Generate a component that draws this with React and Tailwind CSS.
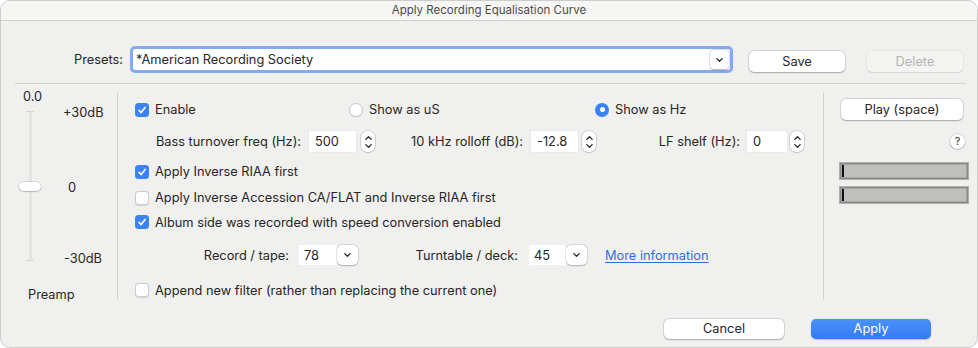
import React from "react";

function Check({ checked }) {
  return checked ? (
    <span className="w-[14px] h-[14px] rounded-[3.5px] bg-[#3a82f7] flex items-center justify-center shrink-0">
      <svg width="10" height="10" viewBox="0 0 10 10">
        <path d="M2 5.3 L4.1 7.6 L8.1 2.4" stroke="white" strokeWidth="1.6" fill="none" strokeLinecap="round" strokeLinejoin="round" />
      </svg>
    </span>
  ) : (
    <span className="w-[14px] h-[14px] rounded-[3.5px] bg-white border border-[#cbcbcb] shadow-[0_0.5px_1px_rgba(0,0,0,0.12)] shrink-0" />
  );
}

function Radio({ checked }) {
  return checked ? (
    <span className="w-[14px] h-[14px] rounded-full bg-[#3a82f7] flex items-center justify-center shrink-0">
      <span className="w-[5px] h-[5px] rounded-full bg-white" />
    </span>
  ) : (
    <span className="w-[14px] h-[14px] rounded-full bg-white border border-[#cbcbcb] shadow-[0_0.5px_1px_rgba(0,0,0,0.12)] shrink-0" />
  );
}

function ChevDown() {
  return (
    <svg width="7" height="4" viewBox="0 0 7 4">
      <path d="M0.8 0.6 L3.5 3.3 L6.2 0.6" stroke="#2a2a2a" strokeWidth="1.3" fill="none" strokeLinecap="round" strokeLinejoin="round" />
    </svg>
  );
}

function ChevUp() {
  return (
    <svg width="7" height="4" viewBox="0 0 7 4">
      <path d="M0.8 3.4 L3.5 0.7 L6.2 3.4" stroke="#2a2a2a" strokeWidth="1.3" fill="none" strokeLinecap="round" strokeLinejoin="round" />
    </svg>
  );
}

function Stepper() {
  return (
    <span className="w-[14px] h-[21px] rounded-[6px] bg-white shadow-[0_0_0_0.5px_rgba(0,0,0,0.18),0_0.5px_1.5px_rgba(0,0,0,0.2)] flex flex-col items-center justify-center gap-[4px] shrink-0">
      <ChevUp />
      <ChevDown />
    </span>
  );
}

function NumField({ value, w }) {
  return (
    <span className={`h-[21px] bg-white shadow-[0_0_0_0.5px_rgba(0,0,0,0.06)] flex items-center pl-[6px] shrink-0 ${w}`}>
      {value}
    </span>
  );
}

function Select({ value, iw }) {
  return (
    <span className="flex items-center h-[20px] shrink-0">
      <span className={`h-[20px] bg-white flex items-center pl-[5px] ${iw}`}>{value}</span>
      <span className="w-[21px] h-[20px] rounded-[5px] bg-white shadow-[0_0_0_0.5px_rgba(0,0,0,0.15),0_0.5px_1.5px_rgba(0,0,0,0.2)] flex items-center justify-center">
        <ChevDown />
      </span>
    </span>
  );
}

function CheckRow({ checked, label, mt }) {
  return (
    <div className={`flex items-center h-[20px] ${mt}`}>
      <Check checked={checked} />
      <span className="ml-[6px]">{label}</span>
    </div>
  );
}

function Meter() {
  return (
    <div className="w-[130px] h-[18px] bg-[#bfc0bd] border border-[#aeafac] shadow-[inset_0_0_0_1.5px_#8b8c89] flex items-stretch py-[2px] pl-[2px]">
      <span className="w-[2px] bg-[#111]" />
    </div>
  );
}

export default function App() {
  return (
    <div className="w-[978px] h-[348px] bg-[#f0f0ee] rounded-[10px] border border-[#cdcdcb] overflow-hidden flex flex-col text-[12.8px] text-[#262626] font-['Inter','Liberation_Sans',sans-serif] box-border">
      {/* title bar */}
      <div className="h-[20px] shrink-0 bg-[#f6f6f4] border-b border-[#cfcfcd] flex items-center justify-center text-[11.5px] text-[#4b4b4b] box-border">
        Apply Recording Equalisation Curve
      </div>

      {/* presets row */}
      <div className="flex items-start mt-[25px] h-[27px] shrink-0">
        <span className="w-[122px] text-right h-[27px] flex items-center justify-end pt-[1px]">Presets:</span>
        <div className="ml-[7px] w-[603px] h-[27px] rounded-[5px] border-[3px] border-[#82aaf3] bg-white flex items-center box-border">
          <span className="flex-1 pl-[3px]">*American Recording Society</span>
          <span className="w-[19px] h-[19px] mr-[1px] rounded-[4px] bg-white shadow-[0_0_0_0.5px_rgba(0,0,0,0.18),0_0.5px_1.5px_rgba(0,0,0,0.22)] flex items-center justify-center">
            <ChevDown />
          </span>
        </div>
        <button className="ml-[16px] mt-[5px] w-[96px] h-[21px] rounded-[5px] bg-white shadow-[0_0_0_0.5px_rgba(0,0,0,0.15),0_0.5px_1.5px_rgba(0,0,0,0.25)] text-[12.8px] text-[#262626]">
          Save
        </button>
        <button className="ml-[22px] mt-[5px] w-[96px] h-[21px] rounded-[5px] bg-[#f4f4f2] shadow-[0_0_0_0.5px_rgba(0,0,0,0.08),0_0.5px_1px_rgba(0,0,0,0.08)] text-[12.8px] text-[#b4b4b2]">
          Delete
        </button>
      </div>

      {/* separator */}
      <div className="ml-[14px] w-[951px] h-[1px] bg-[#d0d0ce] mt-[10px] shrink-0" />

      {/* main */}
      <div className="flex h-[216px] shrink-0">
        {/* left column */}
        <div className="w-[116px] flex flex-col shrink-0">
          <div className="mt-[5px] pl-[22px] h-[16px] leading-[16px]">0.0</div>
          <div className="flex">
            <div className="relative ml-[18px] w-[22px] h-[161px] flex flex-col items-center pt-[6px]">
              <div className="w-[8px] h-[1px] bg-[#d6d6d4]" />
              <div className="w-[3px] h-[148px] bg-[#e3e3e1]" />
              <div className="w-[8px] h-[1px] bg-[#d6d6d4]" />
              <div className="absolute left-0 top-[77px] w-[22px] h-[9px] rounded-full bg-white shadow-[0_0_0_0.5px_rgba(0,0,0,0.15),0_0.5px_1.5px_rgba(0,0,0,0.3)]" />
            </div>
            <div className="flex flex-col ml-[22px]">
              <span className="h-[16px] leading-[16px]">+30dB</span>
              <span className="h-[16px] leading-[16px] mt-[59px] ml-[5px]">0</span>
              <span className="h-[16px] leading-[16px] mt-[55px] ml-[1px]">-30dB</span>
            </div>
          </div>
          <div className="mt-[20px] pl-[27px] h-[16px] leading-[16px]">Preamp</div>
        </div>

        {/* separator */}
        <div className="w-[1px] bg-[#d0d0ce] mt-[9px] h-[207px] shrink-0" />

        {/* middle column */}
        <div className="w-[705px] flex flex-col pl-[17px] shrink-0">
          <div className="flex items-center h-[20px] mt-[16px]">
            <div className="w-[214px] flex items-center">
              <Check checked />
              <span className="ml-[6px]">Enable</span>
            </div>
            <div className="w-[246px] flex items-center">
              <Radio />
              <span className="ml-[6px]">Show as uS</span>
            </div>
            <div className="flex items-center">
              <Radio checked />
              <span className="ml-[6px]">Show as Hz</span>
            </div>
          </div>

          <div className="flex items-center h-[22px] mt-[12px]">
            <span className="w-[166px] text-right">Bass turnover freq (Hz):</span>
            <span className="ml-[8px]"><NumField value="500" w="w-[47px]" /></span>
            <span className="ml-[5px]"><Stepper /></span>
            <span className="w-[148px] text-right">10 kHz rolloff (dB):</span>
            <span className="ml-[8px]"><NumField value="-12.8" w="w-[47px]" /></span>
            <span className="ml-[4px]"><Stepper /></span>
            <span className="w-[144px] text-right">LF shelf (Hz):</span>
            <span className="ml-[7px]"><NumField value="0" w="w-[40px]" /></span>
            <span className="ml-[3px]"><Stepper /></span>
          </div>

          <CheckRow checked label="Apply Inverse RIAA first" mt="mt-[10px]" />
          <CheckRow label="Apply Inverse Accession CA/FLAT and Inverse RIAA first" mt="mt-[7px]" />
          <CheckRow checked label="Album side was recorded with speed conversion enabled" mt="mt-[5px]" />

          <div className="flex items-center h-[22px] mt-[13px]">
            <span className="w-[154px] text-right">Record / tape:</span>
            <span className="ml-[10px]"><Select value="78" iw="w-[38px]" /></span>
            <span className="w-[160px] text-right">Turntable / deck:</span>
            <span className="ml-[11px]"><Select value="45" iw="w-[37px]" /></span>
            <span className="ml-[18px] text-[#2f6ee8] underline underline-offset-2">More information</span>
          </div>

          <CheckRow label="Append new filter (rather than replacing the current one)" mt="mt-[15px]" />
        </div>

        {/* separator */}
        <div className="w-[1px] bg-[#d0d0ce] mt-[9px] h-[207px] shrink-0" />

        {/* right column */}
        <div className="flex flex-col flex-1">
          <button className="ml-[17px] mt-[15px] w-[122px] h-[21px] rounded-[5px] bg-white shadow-[0_0_0_0.5px_rgba(0,0,0,0.15),0_0.5px_1.5px_rgba(0,0,0,0.25)] text-[12.8px] text-[#262626]">
            Play (space)
          </button>
          <div className="flex justify-end pr-[12px] mt-[14px]">
            <span className="w-[15px] h-[15px] rounded-full bg-white shadow-[0_0_0_0.5px_rgba(0,0,0,0.15),0_0.5px_1.5px_rgba(0,0,0,0.25)] flex items-center justify-center text-[11px] text-[#333]">?</span>
          </div>
          <div className="ml-[15px] mt-[13px]"><Meter /></div>
          <div className="ml-[15px] mt-[6px]"><Meter /></div>
        </div>
      </div>

      {/* bottom buttons */}
      <div className="flex mt-[19px] h-[20px] shrink-0">
        <button className="ml-[663px] w-[120px] h-[20px] rounded-[5px] bg-white shadow-[0_0_0_0.5px_rgba(0,0,0,0.15),0_0.5px_1.5px_rgba(0,0,0,0.25)] text-[12.8px] text-[#262626]">
          Cancel
        </button>
        <button className="ml-[27px] w-[120px] h-[20px] rounded-[5px] bg-gradient-to-b from-[#4a92f9] to-[#3478f6] shadow-[0_0.5px_1.5px_rgba(0,0,0,0.2)] text-[12.8px] text-white">
          Apply
        </button>
      </div>
    </div>
  );
}
